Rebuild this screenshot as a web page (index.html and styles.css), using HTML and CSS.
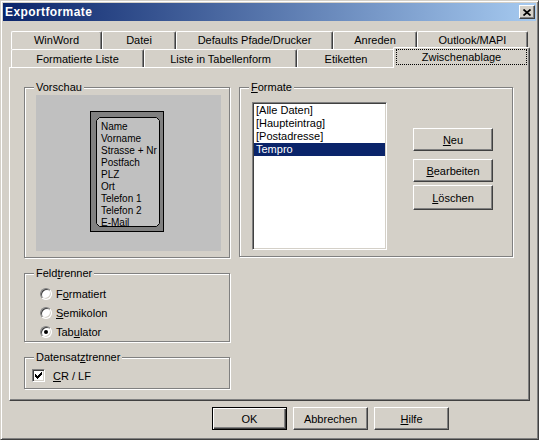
FILE: index.html
```html
<!DOCTYPE html>
<html lang="de">
<head>
<meta charset="utf-8">
<title>Exportformate</title>
<link rel="stylesheet" href="styles.css">
</head>
<body>
<div class="window">
  <div class="titlebar">
    <span class="title">Exportformate</span>
    <span class="close"><svg width="8" height="7" viewBox="0 0 8 7"><path d="M0.5 0.5 L7.5 6.5 M7.5 0.5 L0.5 6.5" stroke="#000" stroke-width="1.7" fill="none"/></svg></span>
  </div>

  <div class="tabctl">
    <div class="tabrow back">
      <div class="tab t-winword">WinWord</div>
      <div class="tab t-datei">Datei</div>
      <div class="tab t-defaults">Defaults Pfade/Drucker</div>
      <div class="tab t-anreden">Anreden</div>
      <div class="tab t-outlook">Outlook/MAPI</div>
    </div>
    <div class="tabrow front">
      <div class="tab t-formliste">Formatierte Liste</div>
      <div class="tab t-tabform">Liste in Tabellenform</div>
      <div class="tab t-etiketten">Etiketten</div>
      <div class="tab sel t-zwischen"><div class="focus">Zwischenablage</div></div>
    </div>

    <div class="page">
      <div class="leftcol">
        <div class="group g-vorschau">
          <span class="group-label">Vorschau</span>
          <div class="preview">
            <div class="card">
              <div class="card-inner">
                <svg class="card-frame" width="64" height="110" viewBox="0 0 64 110"><polygon points="3.5,0.5 60.5,0.5 63.5,3.5 63.5,106.5 60.5,109.5 3.5,109.5 0.5,106.5 0.5,3.5" fill="#c0c0c0" stroke="#000" stroke-width="1"/></svg>
                <div class="card-lines">
                  <div>Name</div>
                  <div>Vorname</div>
                  <div>Strasse + Nr</div>
                  <div>Postfach</div>
                  <div>PLZ</div>
                  <div>Ort</div>
                  <div>Telefon 1</div>
                  <div>Telefon 2</div>
                  <div>E-Mail</div>
                </div>
              </div>
            </div>
          </div>
        </div>

        <div class="group g-feld">
          <span class="group-label">Feld<u>t</u>renner</span>
          <div class="optrow"><span class="radio"></span><span>F<u>o</u>rmatiert</span></div>
          <div class="optrow"><span class="radio"></span><span><u>S</u>emikolon</span></div>
          <div class="optrow"><span class="radio on"></span><span>Tab<u>u</u>lator</span></div>
        </div>

        <div class="group g-satz">
          <span class="group-label">Datensat<u>z</u>trenner</span>
          <div class="chkrow">
            <span class="check"><svg width="7" height="7" viewBox="0 0 7 7" shape-rendering="crispEdges"><path d="M0 2h1v1h1v1h1v-1h1v-1h1v-1h1v-1h1v3h-1v1h-1v1h-1v1h-1v1h-1v-1h-1v-1h-1z" fill="#000"/></svg></span>
            <span><u>C</u>R / LF</span>
          </div>
        </div>
      </div>

      <div class="group g-formate">
        <span class="group-label"><u>F</u>ormate</span>
        <div class="listbox">
          <div class="item">[Alle Daten]</div>
          <div class="item">[Haupteintrag]</div>
          <div class="item">[Postadresse]</div>
          <div class="item selected">Tempro</div>
        </div>
        <div class="sidebtns">
          <button class="btn b-neu"><u>N</u>eu</button>
          <button class="btn b-bearb"><u>B</u>earbeiten</button>
          <button class="btn b-loesch"><u>L</u>öschen</button>
        </div>
      </div>
    </div>
  </div>

  <div class="footer">
    <button class="btn b-foot default">OK</button>
    <button class="btn b-foot">Abbrechen</button>
    <button class="btn b-foot"><u>H</u>ilfe</button>
  </div>
</div>
</body>
</html>
```

FILE: styles.css
```css
* { box-sizing: border-box; }

html, body {
  margin: 0;
  padding: 0;
  background: #d4d0c8;
}

body {
  font-family: "Liberation Sans", Arial, sans-serif;
  font-size: 11px;
  color: #000;
}

u { text-decoration: underline; text-underline-offset: 1px; }

.window {
  width: 539px;
  height: 440px;
  border: 1px solid;
  border-color: #d4d0c8 #404040 #404040 #d4d0c8;
  box-shadow: inset 1px 1px #fff, inset -1px -1px #808080;
  padding: 2px;
  background: #d4d0c8;
}

/* title bar */
.titlebar {
  height: 18px;
  display: flex;
  align-items: center;
  justify-content: space-between;
  padding: 0 1px 0 2px;
  background: linear-gradient(to right, #0a246a, #a6caf0);
}

.title {
  color: #fff;
  font-weight: bold;
  font-size: 12px;
  letter-spacing: 0.4px;
  line-height: 18px;
}

.close {
  width: 16px;
  height: 14px;
  background: #d4d0c8;
  border: 1px solid;
  border-color: #fff #404040 #404040 #fff;
  box-shadow: inset -1px -1px #808080;
  display: flex;
  align-items: center;
  justify-content: center;
}
.close svg { display: block; }

/* tab control */
.tabctl {
  margin: 10px 0 0 6px;
  width: 521px;
}

.tabrow {
  display: flex;
  height: 18px;
  padding-left: 2px;
}
.tabrow.front { align-items: flex-end; }

.tab {
  height: 18px;
  flex: none;
  border-top: 1px solid #fff;
  border-left: 1px solid #fff;
  border-right: 1px solid #404040;
  border-radius: 2px 2px 0 0;
  box-shadow: inset -1px 0 #808080;
  background: #d4d0c8;
  text-align: center;
  line-height: 17px;
  white-space: nowrap;
}

.t-winword  { width: 91px; }
.t-datei    { width: 74px; }
.t-defaults { width: 157px; }
.t-anreden  { width: 84px; }
.t-outlook  { width: 111px; }

.t-formliste { width: 133px; }
.t-tabform   { width: 153px; }
.t-etiketten { width: 98px; }
.t-zwischen  { width: 137px; }

.tabrow.front .tab { line-height: 18px; }

.tab.sel {
  height: 21px;
  margin: 0 -2px -1px -2px;
  position: relative;
  z-index: 2;
  line-height: normal;
}

.focus {
  margin: 1px 2px 0 2px;
  height: 16px;
  border: 1px dotted #000;
  line-height: 14px;
}

.page {
  height: 334px;
  border-top: 1px solid #fff;
  border-left: 1px solid #fff;
  border-right: 1px solid #404040;
  border-bottom: 1px solid #404040;
  box-shadow: inset -1px -1px #808080;
  padding: 19px 0 0 14px;
  display: flex;
  align-items: flex-start;
  gap: 9px;
}

.leftcol {
  width: 206px;
  display: flex;
  flex-direction: column;
  gap: 15px;
}

/* group boxes */
.group {
  position: relative;
  border: 1px solid #808080;
  box-shadow: inset 1px 1px #fff, 1px 1px #fff;
}

.group-label {
  position: absolute;
  top: -7px;
  left: 9px;
  padding: 0 2px;
  background: #d4d0c8;
  line-height: 13px;
  white-space: nowrap;
}

.g-vorschau { height: 171px; }
.g-feld { height: 69px; padding: 10px 0 0 15px; }
.g-satz { height: 32px; padding: 11px 0 0 7px; }
.g-formate {
  width: 274px;
  height: 170px;
  display: flex;
  align-items: flex-start;
}

/* preview */
.preview {
  margin: 7px 0 0 11px;
  width: 185px;
  height: 156px;
  background: #c0c0c0;
  padding: 16px 0 0 54px;
}

.card {
  width: 74px;
  height: 121px;
  border: 1px solid #000;
  background: #808080;
  padding: 5px 3px 4px 5px;
}

.card-inner {
  position: relative;
  width: 64px;
  height: 110px;
}

.card-frame {
  position: absolute;
  left: 0;
  top: 0;
  display: block;
}

.card-lines {
  position: relative;
  padding: 4px 0 0 5px;
  font-size: 10px;
  line-height: 12px;
  white-space: nowrap;
}

/* options */
.optrow {
  height: 19px;
  display: flex;
  align-items: center;
  gap: 4px;
}

.radio {
  width: 12px;
  height: 12px;
  flex: none;
  border-radius: 50%;
  background: #fff;
  border: 1px solid;
  border-color: #808080 #fff #fff #808080;
  box-shadow: inset 1px 1px #404040, inset -1px -1px #d4d0c8;
  display: flex;
  align-items: center;
  justify-content: center;
}
.radio.on::after {
  content: "";
  width: 4px;
  height: 4px;
  border-radius: 50%;
  background: #000;
}

.chkrow {
  display: flex;
  align-items: center;
  gap: 8px;
  height: 13px;
}

.check {
  width: 13px;
  height: 13px;
  flex: none;
  background: #fff;
  border: 1px solid;
  border-color: #808080 #fff #fff #808080;
  box-shadow: inset 1px 1px #404040, inset -1px -1px #d4d0c8;
  display: flex;
  align-items: center;
  justify-content: center;
}
.check svg { display: block; }

/* list */
.listbox {
  margin: 14px 0 0 12px;
  width: 135px;
  height: 148px;
  background: #fff;
  border: 1px solid;
  border-color: #808080 #fff #fff #808080;
  box-shadow: inset 1px 1px #404040, inset -1px -1px #d4d0c8;
  padding: 1px;
}

.item {
  height: 13px;
  line-height: 13px;
  padding-left: 2px;
  white-space: nowrap;
}
.item.selected {
  background: #0a246a;
  color: #fff;
}

.sidebtns {
  margin: 40px 0 0 26px;
  display: flex;
  flex-direction: column;
}

/* buttons */
.btn {
  font: inherit;
  color: #000;
  margin: 0;
  padding: 0;
  background: #d4d0c8;
  border: 1px solid;
  border-color: #fff #404040 #404040 #fff;
  box-shadow: inset -1px -1px #808080;
  display: flex;
  align-items: center;
  justify-content: center;
  white-space: nowrap;
}

.b-neu, .b-bearb, .b-loesch { width: 80px; height: 23px; }
.b-bearb { margin-top: 8px; }
.b-loesch { margin-top: 3px; height: 25px; }

.footer {
  display: flex;
  gap: 6px;
  padding: 6px 0 0 209px;
}

.b-foot { width: 75px; height: 23px; }

.btn.default {
  border-color: #000;
  box-shadow: inset 1px 1px #fff, inset -1px -1px #404040, inset -2px -2px #808080;
}
```
